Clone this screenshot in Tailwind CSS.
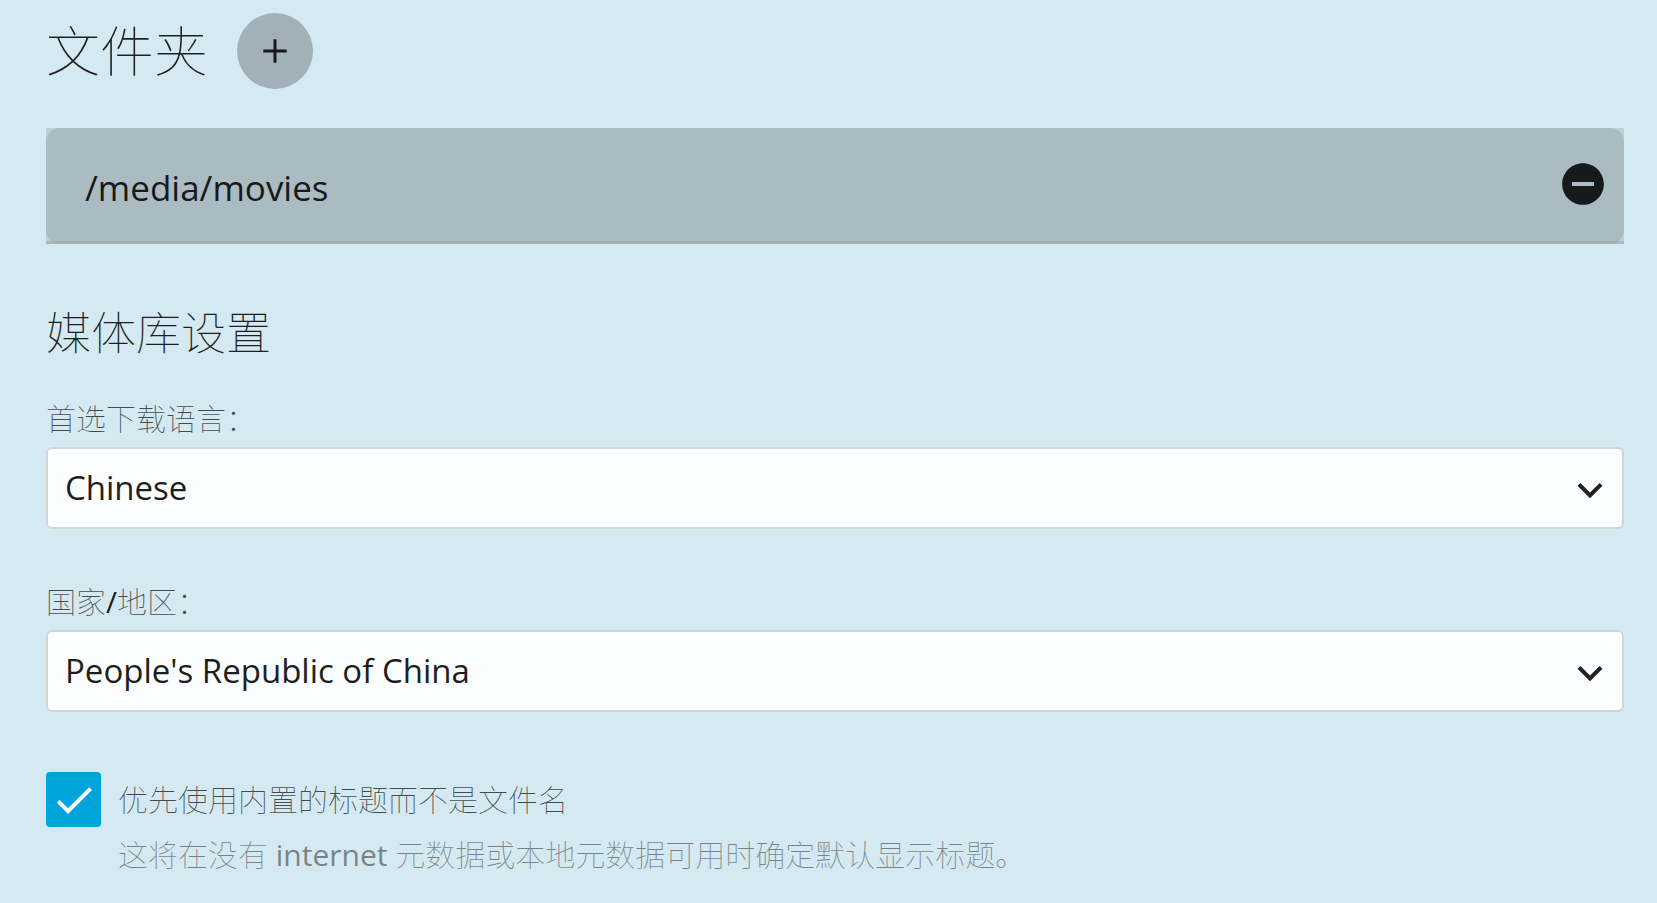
<!DOCTYPE html>
<html lang="zh-CN">
<head>
    <meta charset="UTF-8">
    <meta name="viewport" content="width=device-width, initial-scale=1.0">
    <title>媒体库设置</title>
    <script src="https://cdn.jsdelivr.net/npm/@tailwindcss/browser@4"></script>
</head>
<body class="bg-[#d5e9f2] min-h-screen text-[#1c1f20] font-['Open_Sans','Noto_Sans_CJK_SC',sans-serif]">
    <main class="pt-[13px] pl-[46px] pr-[33px]">
        <header class="flex items-center gap-[29px] mb-[39px]">
            <h1 class="text-[54px] leading-[76px] font-thin">文件夹</h1>
            <button type="button" aria-label="添加文件夹" class="size-[76px] rounded-full bg-[#a2b0b7] flex items-center justify-center">
                <svg class="size-10" viewBox="0 0 24 24" fill="#161a1b"><path d="M19 12.900h-6.100V19h-1.800v-6.100H5v-1.800h6.100V5h1.800v6.100H19z"/></svg>
            </button>
        </header>

        <ul class="bg-[#bccfd8] border-b-3 border-[#a9bac0] mb-[57px]">
            <li class="flex items-center justify-between h-[116px] -mb-[3px] pl-[39px] pr-4 pb-1 rounded-[14px] bg-[#9aa7ac]/50">
                <span class="pt-2 text-[35px] leading-[48px] text-[#161a1b]">/media/movies</span>
                <button type="button" aria-label="移除文件夹" class="size-[50px]">
                    <svg class="size-[50px]" viewBox="0 0 24 24" fill="#161a1b"><path d="M12 2C6.480 2 2 6.480 2 12s4.480 10 10 10 10-4.480 10-10S17.520 2 12 2zm5.300 11H6.700v-2h10.600v2z"/></svg>
                </button>
            </li>
        </ul>

        <h2 class="text-[45px] leading-[64px] font-thin mb-[34px]">媒体库设置</h2>

        <div class="mb-[53px]">
            <label for="language" class="block text-[30px] leading-[40px] font-thin text-[#1c1f20]/80 mb-2">首选下载语言：</label>
            <div class="relative">
                <select id="language" class="appearance-none block w-full h-[82px] pl-[17px] pr-20 rounded-md border-2 border-[#d3d4d6] bg-[#fcfdff] text-[33px] text-[#1c1f20]">
                    <option>Chinese</option>
                </select>
                <svg class="absolute right-[9px] top-[18px] size-[50px] pointer-events-none" viewBox="0 0 24 24" fill="#222"><path d="M7.410 8.590L12 13.170l4.590-4.580L18 10l-6 6-6-6 1.410-1.410z"/></svg>
            </div>
        </div>

        <div class="mb-[60px]">
            <label for="country" class="block text-[30px] leading-[40px] font-thin text-[#1c1f20]/80 mb-2">国家<span class="font-normal text-[#1c1f20]">/</span>地区：</label>
            <div class="relative">
                <select id="country" class="appearance-none block w-full h-[82px] pl-[17px] pr-20 rounded-md border-2 border-[#d3d4d6] bg-[#fcfdff] text-[33px] text-[#1c1f20]">
                    <option>People's Republic of China</option>
                </select>
                <svg class="absolute right-[9px] top-[18px] size-[50px] pointer-events-none" viewBox="0 0 24 24" fill="#222"><path d="M7.410 8.590L12 13.170l4.590-4.580L18 10l-6 6-6-6 1.410-1.410z"/></svg>
            </div>
        </div>

        <div class="grid grid-cols-[55px_1fr] gap-x-[17px]">
            <div class="relative size-[55px]">
                <input id="embedded-titles" type="checkbox" checked aria-describedby="embedded-titles-help" class="peer appearance-none block size-[55px] rounded bg-[#d5e9f2] border-2 border-[#00a4dc] checked:bg-[#00a4dc]">
                <svg class="absolute inset-0 m-auto size-12 pointer-events-none hidden peer-checked:block" viewBox="0 0 24 24" fill="#fff"><path d="M9 16.170L4.830 12l-1.420 1.410L9 19 21 7l-1.410-1.410z"/></svg>
            </div>
            <label for="embedded-titles" class="text-[30px] leading-[55px] font-thin text-[#1c1f20]/80">优先使用内置的标题而不是文件名</label>
            <p id="embedded-titles-help" class="col-start-2 text-[30px] leading-[55px] font-thin opacity-50">这将在没有 <span class="font-medium">internet</span> 元数据或本地元数据可用时确定默认显示标题。</p>
        </div>
    </main>
</body>
</html>
